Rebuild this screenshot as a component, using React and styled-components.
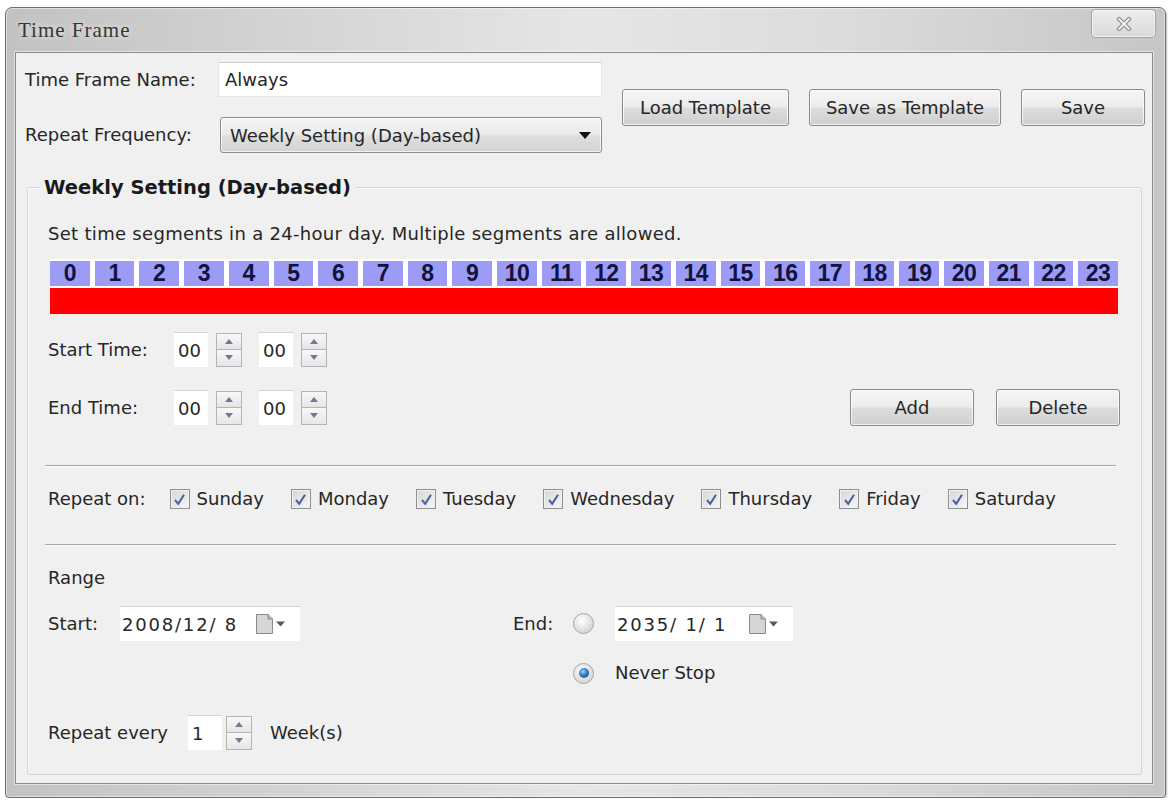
import React from 'react';
import styled, { createGlobalStyle } from 'styled-components';

const GlobalStyle = createGlobalStyle`
  html, body {
    margin: 0;
    padding: 0;
    background: #ffffff;
  }
  body {
    font-family: "DejaVu Sans", "Liberation Sans", Arial, sans-serif;
    color: #222;
  }
`;

const Window = styled.div`
  box-sizing: border-box;
  margin: 7px 0 0 5px;
  width: 1161px;
  height: 791px;
  display: flex;
  flex-direction: column;
  border: 1px solid #6e6e6e;
  border-radius: 7px 7px 4px 4px;
  background: linear-gradient(90deg, #c2c2c2 0%, #d2d2d2 22%, #e6e6e6 50%, #dcdcdc 72%, #c6c6c6 100%);
  padding: 0 12px 13px 9px;
  box-shadow: inset 0 0 0 1px rgba(255, 255, 255, 0.45), 1px 1px 2px rgba(0, 0, 0, 0.25);
`;

const TitleBar = styled.div`
  height: 44px;
  display: flex;
  justify-content: space-between;
  align-items: flex-start;
  flex-shrink: 0;
`;

const Title = styled.span`
  font-family: "Liberation Serif", "Times New Roman", serif;
  font-size: 21px;
  letter-spacing: 1px;
  color: #363636;
  margin: 10px 0 0 3px;
  text-shadow: 0 0 6px rgba(255, 255, 255, 0.8);
`;

const CloseButton = styled.div`
  box-sizing: border-box;
  width: 65px;
  height: 29px;
  margin: 1px -3px 0 0;
  display: flex;
  align-items: center;
  justify-content: center;
  border: 1px solid #a3a3a3;
  border-radius: 4px;
  background: linear-gradient(#ececec, #d9d9d9);
  box-shadow: inset 0 0 0 1px rgba(255, 255, 255, 0.6);
`;

const Client = styled.div`
  flex: 1;
  display: flex;
  flex-direction: column;
  border: 1px solid #8a8a8a;
  background: #f0f0f0;
  padding: 9px 8px 8px 9px;
  box-shadow: 0 0 0 1px rgba(255, 255, 255, 0.5);
`;

const Header = styled.div`
  display: flex;
  align-items: center;
`;

const FieldGrid = styled.div`
  display: grid;
  grid-template-columns: 193px 384px;
  row-gap: 20px;
  align-items: center;
`;

const Label = styled.span`
  font-size: 18px;
  line-height: 24px;
  color: #262626;
  white-space: nowrap;
`;

const TextBox = styled.div`
  box-sizing: border-box;
  height: 35px;
  display: flex;
  align-items: center;
  padding-left: 6px;
  background: #fff;
  border: 1px solid #e4e4e4;
  border-top-color: #cfcfcf;
  font-size: 18px;
  color: #262626;
`;

const Select = styled.div`
  box-sizing: border-box;
  height: 36px;
  margin-left: 2px;
  display: flex;
  align-items: center;
  justify-content: space-between;
  padding: 0 10px 0 9px;
  border: 1px solid #8d8d8d;
  border-radius: 3px;
  background: linear-gradient(#f4f4f4 0%, #ececec 45%, #dedede 55%, #d3d3d3 100%);
  box-shadow: inset 0 0 0 1px rgba(255, 255, 255, 0.7);
  font-size: 18px;
  color: #262626;
`;

const ButtonRow = styled.div`
  display: flex;
  gap: ${p => p.$gap || 20}px;
  margin-left: ${p => (p.$push ? 'auto' : `${p.$offset || 0}px`)};
`;

const Button = styled.div`
  box-sizing: border-box;
  width: ${p => p.$width}px;
  height: 37px;
  display: flex;
  align-items: center;
  justify-content: center;
  border: 1px solid #8a8a8a;
  border-radius: 3px;
  background: linear-gradient(#f5f5f5 0%, #ececec 48%, #dddddd 52%, #cfcfcf 100%);
  box-shadow: inset 0 0 0 1px rgba(255, 255, 255, 0.75);
  font-size: 18px;
  color: #262626;
`;

const Group = styled.div`
  display: flex;
  flex-direction: column;
  margin: 34px 2px 0 2px;
  border: 1px solid #d6d6d6;
  border-radius: 3px;
  padding: 0 21px 24px 20px;
  box-shadow: inset 1px 1px 0 #fafafa;
`;

const GroupTitle = styled.span`
  align-self: flex-start;
  margin: -12px 0 0 -8px;
  padding: 0 4px;
  background: #f0f0f0;
  font-size: 19.5px;
  line-height: 24px;
  font-weight: bold;
  color: #1a1a1a;
`;

const Hint = styled(Label)`
  margin-top: 22px;
  letter-spacing: 0.3px;
`;

const HourBar = styled.div`
  display: grid;
  grid-template-columns: repeat(24, 1fr);
  column-gap: 5px;
  row-gap: 2px;
  margin: 13px 2px 0 2px;
  padding-top: 2px;
  background: #fff;
`;

const HourCell = styled.div`
  height: 25px;
  background: #9c9cf6;
  display: flex;
  align-items: center;
  justify-content: center;
  font-family: "Liberation Sans", Arial, sans-serif;
  font-size: 23px;
  font-weight: bold;
  color: #12123e;
  letter-spacing: -0.5px;
`;

const RedBar = styled.div`
  grid-column: 1 / -1;
  height: 26px;
  background: #fe0000;
`;

const Row = styled.div`
  display: flex;
  align-items: center;
  margin-top: ${p => p.$top || 0}px;
`;

const TimeLabel = styled(Label)`
  width: 126px;
`;

const SpinBox = styled.div`
  box-sizing: border-box;
  width: ${p => p.$width || 34}px;
  height: 35px;
  margin-left: ${p => p.$before || 0}px;
  display: flex;
  align-items: center;
  padding-left: 4px;
  background: #fff;
  border-top: 1px solid #d4d4d4;
  font-size: 18px;
  color: #262626;
`;

const SpinButtons = styled.div`
  box-sizing: border-box;
  width: 26px;
  height: 34px;
  margin: 0 ${p => p.$after || 0}px 0 ${p => p.$before || 8}px;
  display: flex;
  flex-direction: column;
  border: 1px solid #b4b4b4;
  background: #f2f2f2;
`;

const SpinHalf = styled.div`
  flex: 1;
  display: flex;
  align-items: center;
  justify-content: center;
  background: linear-gradient(#f8f8f8, #e6e6e6);
  & + & {
    border-top: 1px solid #b4b4b4;
  }
`;

const Separator = styled.div`
  margin: ${p => p.$top}px 4px 0 -3px;
  border-top: 1px solid #a4a4a4;
  border-bottom: 1px solid #fdfdfd;
`;

const DayList = styled.div`
  display: flex;
  align-items: center;
  gap: 27px;
  margin-left: 24px;
`;

const Day = styled.div`
  display: flex;
  align-items: center;
  gap: 7px;
`;

const CheckBox = styled.span`
  box-sizing: border-box;
  width: 20px;
  height: 20px;
  display: flex;
  align-items: center;
  justify-content: center;
  border: 1px solid #8f8f8f;
  background: linear-gradient(135deg, #d6d6d6, #f6f6f6);
  box-shadow: inset 0 0 0 1px #f2f2f2;
`;

const RangeGrid = styled.div`
  display: grid;
  grid-template-columns: 72px 393px 60px 42px auto;
  row-gap: 20px;
  align-items: center;
  margin-top: 16px;
`;

const DateBox = styled.div`
  box-sizing: border-box;
  width: ${p => p.$width}px;
  height: 35px;
  display: flex;
  align-items: center;
  padding-left: 2px;
  background: #fff;
  border-top: 1px solid #d0d0d0;
  font-size: 18px;
  color: #262626;
`;

const DateText = styled.span`
  white-space: pre;
  letter-spacing: 1.8px;
`;

const CalendarIcon = styled.span`
  display: flex;
  align-items: center;
  margin-left: auto;
  margin-right: 12px;
`;

const Radio = styled.span`
  box-sizing: border-box;
  width: 21px;
  height: 21px;
  border-radius: 50%;
  display: flex;
  align-items: center;
  justify-content: center;
  border: 1px solid #a5a5a5;
  background: radial-gradient(circle at 40% 35%, #ffffff, #d8d8d8 70%, #c8c8c8);
`;

const RadioDot = styled.span`
  width: 10px;
  height: 10px;
  border-radius: 50%;
  background: radial-gradient(circle at 40% 35%, #9fd6ff 0%, #2f7cc0 45%, #123f78 100%);
`;

const Up = () => (
  <svg width="8" height="5" viewBox="0 0 8 5"><path d="M0 5 L4 0 L8 5 Z" fill="#6b7b98" /></svg>
);

const Down = () => (
  <svg width="8" height="5" viewBox="0 0 8 5"><path d="M0 0 L4 5 L8 0 Z" fill="#6b7b98" /></svg>
);

const Spinner = ({ before, after }) => (
  <SpinButtons $before={before} $after={after}>
    <SpinHalf><Up /></SpinHalf>
    <SpinHalf><Down /></SpinHalf>
  </SpinButtons>
);

const Check = () => (
  <CheckBox>
    <svg width="13" height="13" viewBox="0 0 13 13">
      <path d="M2 7 L5.2 10.8 L11 1.8" fill="none" stroke="#4a5f9a" strokeWidth="2" />
    </svg>
  </CheckBox>
);

const Calendar = () => (
  <CalendarIcon>
    <svg width="34" height="22" viewBox="0 0 34 22">
      <path d="M2.5 1.5 H14 L18.5 6 V20.5 H2.5 Z" fill="#d6d6d6" stroke="#8a8a8a" />
      <path d="M14 1.5 V6 H18.5" fill="#bcbcbc" stroke="#8a8a8a" />
      <path d="M22 8.5 L31 8.5 L26.5 13.5 Z" fill="#55586a" />
    </svg>
  </CalendarIcon>
);

const days = ['Sunday', 'Monday', 'Tuesday', 'Wednesday', 'Thursday', 'Friday', 'Saturday'];
const hours = Array.from({ length: 24 }, (_, i) => i);

const App = () => {
  return (
    <>
      <GlobalStyle />
      <Window>
        <TitleBar>
          <Title>Time Frame</Title>
          <CloseButton>
            <svg width="16" height="14" viewBox="0 0 16 14">
              <path d="M3 2 L13 12 M13 2 L3 12" stroke="#8a8a8a" strokeWidth="4.2" strokeLinecap="round" />
              <path d="M3 2 L13 12 M13 2 L3 12" stroke="#f2f2f2" strokeWidth="2" strokeLinecap="round" />
            </svg>
          </CloseButton>
        </TitleBar>

        <Client>
          <Header>
            <FieldGrid>
              <Label>Time Frame Name:</Label>
              <TextBox>Always</TextBox>
              <Label>Repeat Frequency:</Label>
              <Select>
                <span>Weekly Setting (Day-based)</span>
                <svg width="12" height="7" viewBox="0 0 12 7"><path d="M0 0 H12 L6 7 Z" fill="#111" /></svg>
              </Select>
            </FieldGrid>
            <ButtonRow $offset={20}>
              <Button $width={167}>Load Template</Button>
              <Button $width={192}>Save as Template</Button>
              <Button $width={124}>Save</Button>
            </ButtonRow>
          </Header>

          <Group>
            <GroupTitle>Weekly Setting (Day-based)</GroupTitle>
            <Hint>Set time segments in a 24-hour day. Multiple segments are allowed.</Hint>

            <HourBar>
              {hours.map(h => (
                <HourCell key={h}>{h}</HourCell>
              ))}
              <RedBar />
            </HourBar>

            <Row $top={18}>
              <TimeLabel>Start Time:</TimeLabel>
              <SpinBox>00</SpinBox>
              <Spinner after={17} />
              <SpinBox>00</SpinBox>
              <Spinner />
            </Row>

            <Row $top={22}>
              <TimeLabel>End Time:</TimeLabel>
              <SpinBox>00</SpinBox>
              <Spinner after={17} />
              <SpinBox>00</SpinBox>
              <Spinner />
              <ButtonRow $gap={22} $push>
                <Button $width={124}>Add</Button>
                <Button $width={124}>Delete</Button>
              </ButtonRow>
            </Row>

            <Separator $top={39} />

            <Row $top={20}>
              <Label>Repeat on:</Label>
              <DayList>
                {days.map(d => (
                  <Day key={d}>
                    <Check />
                    <Label>{d}</Label>
                  </Day>
                ))}
              </DayList>
            </Row>

            <Separator $top={33} />

            <Row $top={20}>
              <Label>Range</Label>
            </Row>

            <RangeGrid>
              <Label>Start:</Label>
              <div>
                <DateBox $width={180}>
                  <DateText>2008/12/ 8</DateText>
                  <Calendar />
                </DateBox>
              </div>
              <Label>End:</Label>
              <Radio />
              <DateBox $width={178}>
                <DateText>2035/ 1/ 1</DateText>
                <Calendar />
              </DateBox>

              <span />
              <span />
              <span />
              <Radio>
                <RadioDot />
              </Radio>
              <Label>Never Stop</Label>
            </RangeGrid>

            <Row $top={30}>
              <Label>Repeat every</Label>
              <SpinBox $before={20}>1</SpinBox>
              <Spinner before={4} />
              <Label as="span" style={{ marginLeft: 18 }}>Week(s)</Label>
            </Row>
          </Group>
        </Client>
      </Window>
    </>
  );
};

export default App;
